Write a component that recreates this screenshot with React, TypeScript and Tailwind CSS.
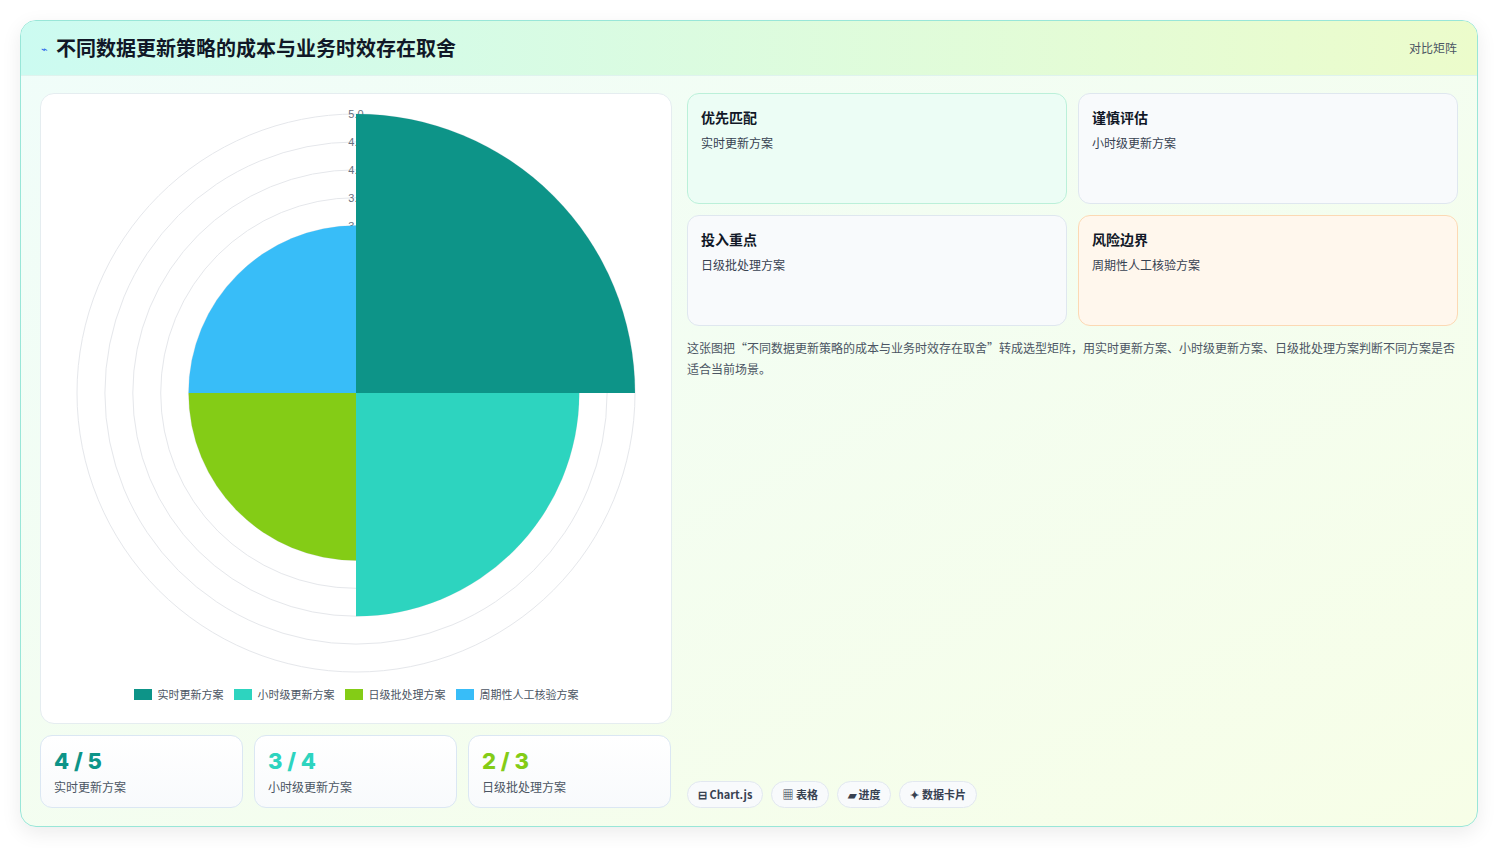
import React from "react";

const C = { x: 315, y: 299 };
const u = 55.8;
function wedge(v: number, a0: number, a1: number) {
  const r = v * u;
  const p = (a: number) => [C.x + r * Math.cos(a), C.y + r * Math.sin(a)];
  const [x0, y0] = p(a0);
  const [x1, y1] = p(a1);
  return `M${C.x} ${C.y} L${x0} ${y0} A${r} ${r} 0 0 1 ${x1} ${y1} Z`;
}
const H = Math.PI / 2;
const segs = [
  { v: 5, c: "#0d9488", a: -H },
  { v: 4, c: "#2dd4bf", a: 0 },
  { v: 3, c: "#84cc16", a: H },
  { v: 3, c: "#38bdf8", a: 2 * H },
];
const legend = [
  ["实时更新方案", "#0d9488"],
  ["小时级更新方案", "#2dd4bf"],
  ["日级批处理方案", "#84cc16"],
  ["周期性人工核验方案", "#38bdf8"],
];

export default function App() {
  const font = { fontFamily: '"Noto Sans CJK SC", "Noto Sans", sans-serif' };
  return (
    <div className="w-[1498px] h-[848px] bg-white pt-[20px] px-[20px]" style={font}>
      <div className="w-[1458px] h-[807px] rounded-[16px] border border-[#99e6d8] overflow-hidden flex flex-col bg-gradient-to-br from-[#f0fdfa] to-[#f7fee7] shadow-[0_6px_20px_rgba(0,0,0,0.08)]">
        <div className="h-[55px] shrink-0 flex items-center justify-between px-[20px] bg-gradient-to-r from-[#ccfbf1] to-[#ecfccb] border-b border-[#dff3ee]">
          <div className="flex items-center gap-[8px]">
            <span className="text-[#2563eb] text-[11px]">⌁</span>
            <span className="text-[20px] font-bold text-[#111827]">不同数据更新策略的成本与业务时效存在取舍</span>
          </div>
          <span className="text-[12px] text-[#4b5563]">对比矩阵</span>
        </div>
        <div className="flex-1 flex gap-[15px] px-[19px] pt-[17px] pb-[18px]">
          <div className="w-[632px] flex flex-col gap-[11px]">
            <div className="h-[631px] bg-white rounded-[14px] border border-[#e5edf0] relative">
              <svg width="632" height="631" className="absolute left-0 top-0">
                {Array.from({ length: 10 }, (_, i) => (
                  <circle key={i} cx={C.x} cy={C.y} r={(i + 1) * 0.5 * u} fill="none" stroke="#e5e7eb" strokeWidth="1" />
                ))}
                {["5.0", "4.5", "4.0", "3.5", "3.0"].map((t, i) => (
                  <text key={t} x={C.x} y={C.y - (5 - i * 0.5) * u + 4} fontSize="11" fill="#6b7280" textAnchor="middle" style={{ fontFamily: "Liberation Sans, sans-serif" }}>{t}</text>
                ))}
                {segs.map((s, i) => (
                  <path key={i} d={wedge(s.v, s.a, s.a + H)} fill={s.c} />
                ))}
              </svg>
              <div className="absolute left-0 right-0 top-[592px] flex justify-center gap-[10px] text-[11px] text-[#4b5563]">
                {legend.map(([t, c]) => (
                  <div key={t} className="flex items-center gap-[6px]">
                    <span className="w-[18px] h-[11px]" style={{ background: c }} />
                    {t}
                  </div>
                ))}
              </div>
            </div>
            <div className="flex gap-[11px]">
              {[
                ["4 / 5", "实时更新方案", "text-[#0d9488]"],
                ["3 / 4", "小时级更新方案", "text-[#2dd4bf]"],
                ["2 / 3", "日级批处理方案", "text-[#84cc16]"],
              ].map(([n, l, c]) => (
                <div key={l} className="w-[203px] h-[73px] rounded-[12px] border border-[#dbe7f3] bg-gradient-to-b from-white to-[#f8fafc] px-[13px] pt-[10px]">
                  <div className={`text-[22px] leading-[30px] font-extrabold ${c}`} style={{ fontFamily: "Inter, sans-serif" }}>{n}</div>
                  <div className="text-[12px] text-[#4b5563] mt-[2px]">{l}</div>
                </div>
              ))}
            </div>
          </div>
          <div className="flex-1 flex flex-col">
            <div className="grid grid-cols-2 gap-[11px]">
              {[
                ["优先匹配", "实时更新方案", "bg-[#ecfdf5] border-[#bbf0d9]"],
                ["谨慎评估", "小时级更新方案", "bg-[#f8fafc] border-[#dfe7ef]"],
                ["投入重点", "日级批处理方案", "bg-[#f8fafc] border-[#dfe7ef]"],
                ["风险边界", "周期性人工核验方案", "bg-[#fff7ed] border-[#fcd9b4]"],
              ].map(([t, s, c]) => (
                <div key={t} className={`h-[111px] rounded-[12px] border ${c} px-[13px] pt-[13px]`}>
                  <div className="text-[14px] font-bold text-[#111827]">{t}</div>
                  <div className="text-[12px] text-[#374151] mt-[6px]">{s}</div>
                </div>
              ))}
            </div>
            <p className="mt-[11px] text-[12px] leading-[21px] text-[#4b5563]">
              这张图把“不同数据更新策略的成本与业务时效存在取舍”转成选型矩阵，用实时更新方案、小时级更新方案、日级批处理方案判断不同方案是否适合当前场景。
            </p>
            <div className="mt-auto flex gap-[8px]">
              {["⊟ Chart.js", "▦ 表格", "▰ 进度", "✦ 数据卡片"].map((t) => (
                <span key={t} className="h-[27px] px-[10px] rounded-full border border-[#e2e8f0] bg-[#f8fafc] text-[11px] font-bold text-[#374151] flex items-center">{t}</span>
              ))}
            </div>
          </div>
        </div>
      </div>
    </div>
  );
}
